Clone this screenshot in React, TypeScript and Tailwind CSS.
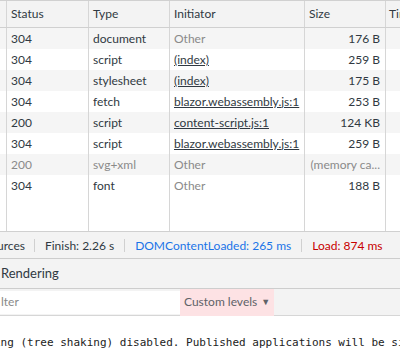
const rows = [
  { status: "304", type: "document", initiator: "Other", link: false, size: "176 B" },
  { status: "304", type: "script", initiator: "(index)", link: true, size: "259 B" },
  { status: "304", type: "stylesheet", initiator: "(index)", link: true, size: "175 B" },
  { status: "304", type: "fetch", initiator: "blazor.webassembly.js:1", link: true, size: "253 B" },
  { status: "200", type: "script", initiator: "content-script.js:1", link: true, size: "124 KB" },
  { status: "304", type: "script", initiator: "blazor.webassembly.js:1", link: true, size: "259 B" },
  { status: "200", type: "svg+xml", initiator: "Other", link: false, size: "(memory ca...", dim: true },
  { status: "304", type: "font", initiator: "Other", link: false, size: "188 B" },
];

const cols = "grid grid-cols-[7px_82px_81px_135px_81px_1fr]";

export default function App() {
  return (
    <div
      className="w-[400px] h-[352px] overflow-hidden bg-white text-[12px] text-[#303942] flex flex-col"
      style={{ fontFamily: '"Segoe UI", Lato, "Noto Sans", sans-serif' }}
    >
      {/* network table */}
      <div className="h-[231px] shrink-0 flex flex-col border-t border-[#d0d0d0] overflow-hidden">
        <div className={`${cols} h-[27px] bg-[#f3f3f3] border-b border-[#d0d0d0] shrink-0`}>
          <div className="border-r border-[#d6d6d6]" />
          <div className="border-r border-[#d6d6d6] pl-[4px] flex items-center">Status</div>
          <div className="border-r border-[#d6d6d6] pl-[4px] flex items-center">Type</div>
          <div className="border-r border-[#d6d6d6] pl-[4px] flex items-center">Initiator</div>
          <div className="border-r border-[#d6d6d6] pl-[4px] flex items-center">Size</div>
          <div className="pl-[3px] flex items-center whitespace-nowrap overflow-hidden">Time</div>
        </div>
        {rows.map((r, i) => (
          <div
            key={i}
            className={`${cols} h-[21px] shrink-0 ${i % 2 === 0 ? "bg-[#f5f5f5]" : "bg-white"} ${r.dim ? "text-[#8a8a8a]" : ""}`}
          >
            <div className="border-r border-[#d6d6d6]" />
            <div className="border-r border-[#d6d6d6] pl-[4px] flex items-center">{r.status}</div>
            <div className="border-r border-[#d6d6d6] pl-[4px] flex items-center">{r.type}</div>
            <div className="border-r border-[#d6d6d6] pl-[4px] flex items-center whitespace-nowrap overflow-hidden">
              {r.link ? (
                <span className="underline">{r.initiator}</span>
              ) : (
                <span className="text-[#8a8a8a]">{r.initiator}</span>
              )}
            </div>
            <div className="border-r border-[#d6d6d6] pr-[5px] flex items-center justify-end whitespace-nowrap overflow-hidden">
              {r.size}
            </div>
            <div />
          </div>
        ))}
        <div className={`${cols} flex-1`}>
          <div className="border-r border-[#d6d6d6]" />
          <div className="border-r border-[#d6d6d6]" />
          <div className="border-r border-[#d6d6d6]" />
          <div className="border-r border-[#d6d6d6]" />
          <div className="border-r border-[#d6d6d6]" />
          <div />
        </div>
      </div>

      {/* summary bar */}
      <div className="h-[27px] shrink-0 bg-[#f3f3f3] border-t border-[#d0d0d0] flex items-center whitespace-nowrap">
        <span className="ml-[-3px] pr-[9px] border-r border-[#d0d0d0] leading-[13px]">urces</span>
        <span className="px-[10px] border-r border-[#d0d0d0] leading-[13px]">Finish: 2.26 s</span>
        <span className="px-[10px] border-r border-[#d0d0d0] leading-[13px] text-[#1a73e8]">DOMContentLoaded: 265 ms</span>
        <span className="px-[10px] leading-[13px] text-[#c80000]">Load: 874 ms</span>
      </div>

      {/* drawer tabs */}
      <div className="h-[31px] shrink-0 bg-[#f3f3f3] border-t border-b border-[#cdcdcd] flex items-center">
        <span className="pl-[1px] text-[13px]">Rendering</span>
      </div>

      {/* console filter */}
      <div className="h-[27px] shrink-0 bg-[#f3f3f3] border-b border-[#d6d6d6] flex items-center">
        <div className="w-[180px] h-[23px] bg-white flex items-center text-[#8a8a8a]">
          <span className="pl-[1px]">lter</span>
        </div>
        <div className="h-[27px] px-[4px] bg-[#fde2e4] flex items-center gap-[4px] text-[#5f6368] whitespace-nowrap">
          Custom levels <span className="text-[9px]">▼</span>
        </div>
      </div>

      {/* console output */}
      <div className="flex-1 bg-white">
        <div
          className="mt-[19px] whitespace-nowrap text-[11px] text-[#222] ml-[-6px]"
          style={{ fontFamily: '"DejaVu Sans Mono", "Liberation Mono", monospace' }}
        >
          ing (tree shaking) disabled. Published applications will be significantly larger
        </div>
      </div>
    </div>
  );
}
